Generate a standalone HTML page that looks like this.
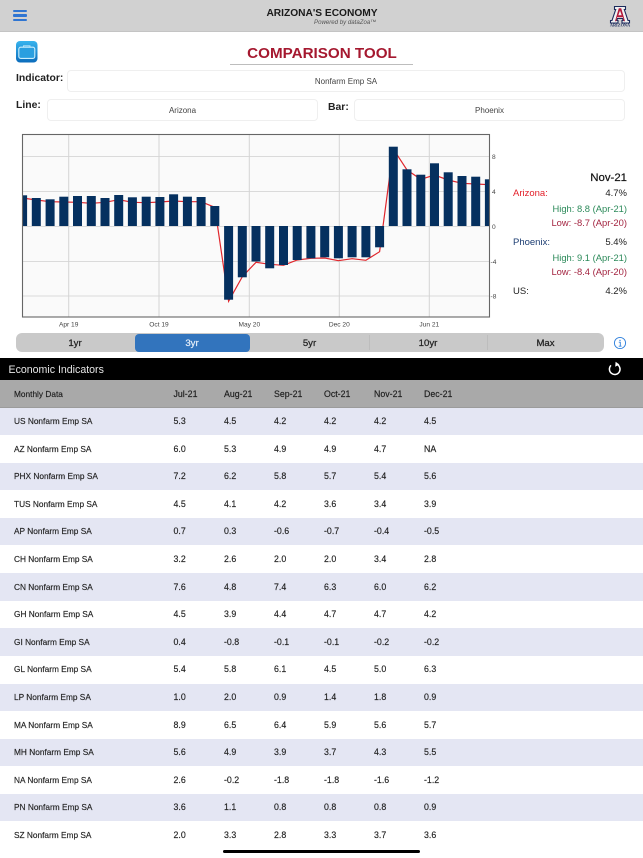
<!DOCTYPE html>
<html><head><meta charset="utf-8">
<style>
html,body{margin:0;padding:0;background:#fff}
#p{position:relative;width:643px;height:858px;overflow:hidden;background:#fff;font-family:"Liberation Sans",sans-serif;color:#222;filter:blur(.25px)}
#p div{position:absolute}
.b{background:#fff;border:1px solid #efefef;border-radius:4px;box-sizing:border-box;text-align:center;font-size:8px;color:#444}
.l{font-size:10.4px;font-weight:bold;line-height:14px;color:#222;white-space:nowrap}
.s{top:333.5px;height:19px;line-height:19px;font-size:9.6px;text-align:center;color:#222;-webkit-text-stroke:.25px #222}
.r{left:0;width:643px;height:27.6px;font-size:8.8px;line-height:27.6px;color:#222;-webkit-text-stroke:.15px #222}
.r span,.h span{position:absolute;top:.5px;white-space:nowrap}
.r span:nth-child(1),.h span:nth-child(1){left:14px;font-size:8.3px}
.r span:nth-child(2),.h span:nth-child(2){left:173.5px}
.r span:nth-child(3),.h span:nth-child(3){left:224px}
.r span:nth-child(4),.h span:nth-child(4){left:274px}
.r span:nth-child(5),.h span:nth-child(5){left:324px}
.r span:nth-child(6),.h span:nth-child(6){left:374px}
.r span:nth-child(7),.h span:nth-child(7){left:424px}
.e{background:#e4e6f3}
.i{font-size:9.5px;line-height:14px;white-space:nowrap}
.rt{right:16px;text-align:right}
</style></head><body><div id="p">

<div style="left:0;top:0;width:643px;height:32px;background:#d1d1d1;border-bottom:1px solid #c4c4c4;box-sizing:border-box"></div>
<div style="left:13px;top:9.8px;width:14px;height:2.5px;background:#2f75d2;border-radius:1px"></div>
<div style="left:13px;top:14.3px;width:14px;height:2.5px;background:#2f75d2;border-radius:1px"></div>
<div style="left:13px;top:18.8px;width:14px;height:2.5px;background:#2f75d2;border-radius:1px"></div>
<div style="left:222px;width:200px;top:6.5px;text-align:center;font-size:10.2px;line-height:13px;font-weight:bold;color:#1a1a1a">ARIZONA'S ECONOMY</div>
<div style="left:314px;top:18.5px;font-size:6.1px;line-height:8px;font-style:italic;color:#555;white-space:nowrap">Powered by dataZoa™</div>
<svg style="position:absolute;left:608px;top:4px" width="24" height="24" viewBox="0 0 24 24">
<path d="M6.500 2.500H17.500V5.500H16.300L20 16.500H21.500V19H14V16.500H15.200L14.600 14.500H9.400L8.800 16.500H10V19H2.500V16.500H4L7.700 5.500H6.500Z" fill="#f2f2f2" stroke="#1b2a5c" stroke-width="1.100"/>
<path d="M10.800 4.300H13.200L17 17.200H15.800L14.900 13.300H9.100L8.200 17.200H7Z" fill="#b3193a"/>
<path d="M10.300 11.200H13.700L12 6.500Z" fill="#f0f0f0"/>
<text x="12" y="22.500" font-family="Liberation Serif,serif" font-size="4.300" fill="#1b2a5c" text-anchor="middle" font-weight="bold">ARIZONA</text>
</svg>

<svg style="position:absolute;left:16px;top:41px" width="22" height="22" viewBox="0 0 22 22">
<defs><linearGradient id="g" x1="0" y1="0" x2="0" y2="1"><stop offset="0" stop-color="#37b4ee"/><stop offset="1" stop-color="#0b6cbc"/></linearGradient></defs>
<rect width="21.500" height="21.500" rx="4" fill="url(#g)"/>
<rect x="2.800" y="6.200" width="16" height="11.200" rx="2" fill="#2a9fe0" stroke="#c9eefc" stroke-width="1.100"/>
<path d="M7.500 6V4.800H14V6" fill="none" stroke="#bfe8f9" stroke-width="0.900"/>
</svg>

<div style="left:172px;width:300px;top:44px;text-align:center;font-size:15.200px;line-height:19px;font-weight:bold;color:#a5182f">COMPARISON TOOL</div>
<div style="left:230px;top:64px;width:183px;height:1px;background:#bdbdbd"></div>

<div class="l" style="left:16px;top:72px">Indicator:</div>
<div class="b" style="left:67px;top:70px;width:558px;height:22px;line-height:21px">Nonfarm Emp SA</div>
<div class="l" style="left:16px;top:98.500px">Line:</div>
<div class="b" style="left:47px;top:98.500px;width:271px;height:22px;line-height:21px">Arizona</div>
<div class="l" style="left:328px;top:100.500px">Bar:</div>
<div class="b" style="left:354px;top:98.500px;width:271px;height:22px;line-height:21px">Phoenix</div>

<svg style="position:absolute;left:0;top:125px" width="510" height="208" viewBox="0 125 510 208">
<rect x="22.500" y="134.500" width="467" height="182.500" fill="#fafafa"/>
<g stroke="#dadada" stroke-width="1" fill="none">
<path d="M22 156.500H490M22 191.500H490M22 226.500H490M22 261.500H490M22 296H490"/>
<path d="M68.700 135V317M159 135V317M249.300 135V317M339.300 135V317M429.300 135V317" stroke="#d4d4d4"/>
</g>
<polyline fill="none" stroke="#e0262c" stroke-width="1.200" points="22.600,198 36.300,200 50.100,201.700 63.800,202 77.500,202.300 91.300,203.300 105,202.300 118.700,199.700 132.400,202.300 146.200,202.700 159.900,202 173.600,201 187.400,201.700 201.100,201.700 214.800,207.300 228.600,301.300 242.300,276.700 256,262.300 269.700,264.300 283.500,265.300 297.200,260 310.900,258.300 324.700,258 338.400,260.700 352.100,258.700 365.900,260.300 379.600,251.700 393.300,149 407,170 420.800,179.300 434.500,175 448.200,180 462,183.300 475.700,184 489.400,184.700"/>
<g fill="#05305f">
<rect x="22.500" y="195.300" width="4.600" height="30.700"/>
<rect x="31.800" y="198" width="9" height="28"/>
<rect x="45.600" y="199.300" width="9" height="26.700"/>
<rect x="59.300" y="196.700" width="9" height="29.300"/>
<rect x="73" y="196" width="9" height="30"/>
<rect x="86.800" y="196" width="9" height="30"/>
<rect x="100.500" y="198" width="9" height="28"/>
<rect x="114.200" y="195" width="9" height="31"/>
<rect x="127.900" y="197.300" width="9" height="28.700"/>
<rect x="141.700" y="196.700" width="9" height="29.300"/>
<rect x="155.400" y="197" width="9" height="29"/>
<rect x="169.100" y="194.300" width="9" height="31.700"/>
<rect x="182.900" y="196.700" width="9" height="29.300"/>
<rect x="196.600" y="197" width="9" height="29"/>
<rect x="210.300" y="206" width="9" height="20"/>
<rect x="224.100" y="226" width="9" height="73.700"/>
<rect x="237.800" y="226" width="9" height="51.300"/>
<rect x="251.500" y="226" width="9" height="35.500"/>
<rect x="265.200" y="226" width="9" height="42.300"/>
<rect x="279" y="226" width="9" height="39"/>
<rect x="292.700" y="226" width="9" height="34"/>
<rect x="306.400" y="226" width="9" height="32.300"/>
<rect x="320.200" y="226" width="9" height="31.300"/>
<rect x="333.900" y="226" width="9" height="32.300"/>
<rect x="347.600" y="226" width="9" height="31.300"/>
<rect x="361.400" y="226" width="9" height="31.300"/>
<rect x="375.100" y="226" width="9" height="21.300"/>
<rect x="388.800" y="146.700" width="9" height="79.300"/>
<rect x="402.500" y="169.300" width="9" height="56.700"/>
<rect x="416.300" y="174.700" width="9" height="51.300"/>
<rect x="430" y="163.300" width="9" height="62.700"/>
<rect x="443.700" y="172.300" width="9" height="53.700"/>
<rect x="457.500" y="176" width="9" height="50"/>
<rect x="471.200" y="176.700" width="9" height="49.300"/>
<rect x="484.900" y="179.300" width="4.600" height="46.700"/>
</g>
<rect x="22.500" y="134.500" width="467" height="182.500" fill="none" stroke="#666" stroke-width="1.100"/>
<g font-family="Liberation Sans,sans-serif" font-size="6.600" fill="#444">
<text x="492" y="159">8</text><text x="492" y="194">4</text><text x="492" y="229">0</text><text x="490.500" y="264">-4</text><text x="490.500" y="298.500">-8</text>
<g text-anchor="middle"><text x="68.700" y="326.500">Apr 19</text><text x="159" y="326.500">Oct 19</text><text x="249.300" y="326.500">May 20</text><text x="339.300" y="326.500">Dec 20</text><text x="429.300" y="326.500">Jun 21</text></g>
</g>
</svg>

<div class="rt" style="top:170.500px;font-size:11.400px;line-height:15px;color:#111;-webkit-text-stroke:.2px #111">Nov-21</div>
<div class="i" style="left:513px;top:187px;color:#e3202a">Arizona:</div>
<div class="i rt" style="top:187px;color:#222">4.7%</div>
<div class="i rt" style="top:202px;color:#2c8a5a;font-size:9.400px">High: 8.8 (Apr-21)</div>
<div class="i rt" style="top:215.500px;color:#a32440;font-size:9.400px">Low: -8.7 (Apr-20)</div>
<div class="i" style="left:513px;top:236px;color:#1c3d72">Phoenix:</div>
<div class="i rt" style="top:236px;color:#222">5.4%</div>
<div class="i rt" style="top:251px;color:#2c8a5a;font-size:9.400px">High: 9.1 (Apr-21)</div>
<div class="i rt" style="top:265px;color:#a32440;font-size:9.400px">Low: -8.4 (Apr-20)</div>
<div class="i" style="left:513px;top:285px;color:#222">US:</div>
<div class="i rt" style="top:285px;color:#222">4.2%</div>

<div style="left:16px;top:333px;width:588px;height:19px;background:#c9c9c9;border-radius:6px"></div>
<div style="left:134.500px;top:333.500px;width:115px;height:18px;background:#3274bd;border-radius:4px"></div>
<div style="left:368.500px;top:335px;width:1px;height:15px;background:#bdbdbd"></div>
<div style="left:486.500px;top:335px;width:1px;height:15px;background:#bdbdbd"></div>
<div class="s" style="left:16px;width:118px">1yr</div>
<div class="s" style="left:134.500px;width:115px;color:#e8f0fa;-webkit-text-stroke:.2px #e8f0fa">3yr</div>
<div class="s" style="left:250px;width:119px">5yr</div>
<div class="s" style="left:369px;width:118px">10yr</div>
<div class="s" style="left:487px;width:117px">Max</div>
<svg style="position:absolute;left:613px;top:336px" width="14" height="14" viewBox="0 0 14 14">
<circle cx="7" cy="7" r="5.600" fill="none" stroke="#2f80dc" stroke-width="0.900"/>
<circle cx="7" cy="4.400" r="0.700" fill="#2f80dc"/>
<path d="M5.800 6.200H7.300V10M5.700 10.200H8.500" fill="none" stroke="#2f80dc" stroke-width="0.900"/>
</svg>

<div style="left:0;top:358px;width:643px;height:22px;background:#000"></div>
<div style="left:8.500px;top:362.500px;font-size:10.600px;line-height:14px;color:#e6e6e6">Economic Indicators</div>
<svg style="position:absolute;left:607px;top:361px" width="16" height="16" viewBox="0 0 16 16">
<path d="M9.600 3.200A5.300 5.300 0 1 1 4 4.400" fill="none" stroke="#fff" stroke-width="1.500"/>
<path d="M8.600 0.700L12.400 3.500L8.200 5.800Z" fill="#fff"/>
</svg>

<div class="h" style="left:0;top:380px;width:643px;height:27.500px;background:#a9a9a9;border-bottom:1px solid #9b9b9b;box-sizing:border-box;font-size:8.800px;line-height:27px;color:#1c1c1c;-webkit-text-stroke:.15px #1c1c1c">
<span>Monthly Data</span><span>Jul-21</span><span>Aug-21</span><span>Sep-21</span><span>Oct-21</span><span>Nov-21</span><span>Dec-21</span></div>

<div class="r e" style="top:407.500px"><span>US Nonfarm Emp SA</span><span>5.3</span><span>4.5</span><span>4.2</span><span>4.2</span><span>4.2</span><span>4.5</span></div>
<div class="r" style="top:435.100px"><span>AZ Nonfarm Emp SA</span><span>6.0</span><span>5.3</span><span>4.9</span><span>4.9</span><span>4.7</span><span>NA</span></div>
<div class="r e" style="top:462.700px"><span>PHX Nonfarm Emp SA</span><span>7.2</span><span>6.2</span><span>5.8</span><span>5.7</span><span>5.4</span><span>5.6</span></div>
<div class="r" style="top:490.300px"><span>TUS Nonfarm Emp SA</span><span>4.5</span><span>4.1</span><span>4.2</span><span>3.6</span><span>3.4</span><span>3.9</span></div>
<div class="r e" style="top:517.900px"><span>AP Nonfarm Emp SA</span><span>0.7</span><span>0.3</span><span>-0.6</span><span>-0.7</span><span>-0.4</span><span>-0.5</span></div>
<div class="r" style="top:545.500px"><span>CH Nonfarm Emp SA</span><span>3.2</span><span>2.6</span><span>2.0</span><span>2.0</span><span>3.4</span><span>2.8</span></div>
<div class="r e" style="top:573.100px"><span>CN Nonfarm Emp SA</span><span>7.6</span><span>4.8</span><span>7.4</span><span>6.3</span><span>6.0</span><span>6.2</span></div>
<div class="r" style="top:600.700px"><span>GH Nonfarm Emp SA</span><span>4.5</span><span>3.9</span><span>4.4</span><span>4.7</span><span>4.7</span><span>4.2</span></div>
<div class="r e" style="top:628.300px"><span>GI Nonfarm Emp SA</span><span>0.4</span><span>-0.8</span><span>-0.1</span><span>-0.1</span><span>-0.2</span><span>-0.2</span></div>
<div class="r" style="top:655.900px"><span>GL Nonfarm Emp SA</span><span>5.4</span><span>5.8</span><span>6.1</span><span>4.5</span><span>5.0</span><span>6.3</span></div>
<div class="r e" style="top:683.500px"><span>LP Nonfarm Emp SA</span><span>1.0</span><span>2.0</span><span>0.9</span><span>1.4</span><span>1.8</span><span>0.9</span></div>
<div class="r" style="top:711.100px"><span>MA Nonfarm Emp SA</span><span>8.9</span><span>6.5</span><span>6.4</span><span>5.9</span><span>5.6</span><span>5.7</span></div>
<div class="r e" style="top:738.700px"><span>MH Nonfarm Emp SA</span><span>5.6</span><span>4.9</span><span>3.9</span><span>3.7</span><span>4.3</span><span>5.5</span></div>
<div class="r" style="top:766.300px"><span>NA Nonfarm Emp SA</span><span>2.6</span><span>-0.2</span><span>-1.8</span><span>-1.8</span><span>-1.6</span><span>-1.2</span></div>
<div class="r e" style="top:793.900px"><span>PN Nonfarm Emp SA</span><span>3.6</span><span>1.1</span><span>0.8</span><span>0.8</span><span>0.8</span><span>0.9</span></div>
<div class="r" style="top:821.500px"><span>SZ Nonfarm Emp SA</span><span>2.0</span><span>3.3</span><span>2.8</span><span>3.3</span><span>3.7</span><span>3.6</span></div>

<div style="left:223px;top:850px;width:197px;height:3px;background:#000;border-radius:2px"></div>
</div></body></html>
